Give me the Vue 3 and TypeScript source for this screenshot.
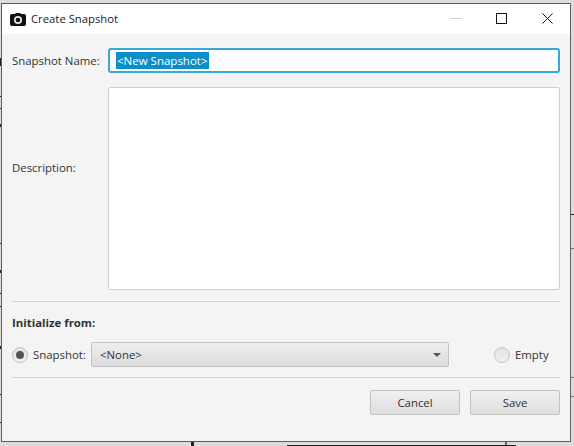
<script setup lang="ts">
const title = 'Create Snapshot'
const marks: { cls: string; top: number }[] = [
  { cls: 'dark', top: 214 },
  { cls: 'mid', top: 248 },
  { cls: 'mid', top: 377 },
  { cls: 'mid', top: 396 },
]
const leftMarks: { top: number; height: number }[] = [
  { top: 58, height: 8 },
  { top: 96, height: 1 },
  { top: 108, height: 1 },
  { top: 124, height: 3 },
  { top: 243, height: 1 },
  { top: 270, height: 3 },
  { top: 293, height: 1 },
  { top: 306, height: 1 },
  { top: 346, height: 3 },
  { top: 394, height: 1 },
  { top: 422, height: 1 },
]
</script>

<template>
  <div class="desktop">
    <span v-for="m in marks" :key="m.top" class="tick" :class="m.cls" :style="{ top: m.top + 'px' }"></span>
    <span v-for="m in leftMarks" :key="m.top" class="ltick" :style="{ top: m.top + 'px', height: m.height + 'px' }"></span>
    <span class="under v1"></span>
    <span class="under v2"></span>
    <span class="under h1"></span>
    <div class="window">
      <header class="titlebar">
        <svg class="cam" width="16" height="13" viewBox="0 0 16 13">
          <path fill="#111" d="M5 1 5.8 0h4.4l.8 1h3.2A1.8 1.8 0 0 1 16 2.8v8.4a1.8 1.8 0 0 1-1.8 1.8H1.8A1.8 1.8 0 0 1 0 11.2V2.8A1.8 1.8 0 0 1 1.8 1z" />
          <circle cx="8" cy="7" r="4" fill="#e8e8e8" />
          <circle cx="8" cy="7" r="2.3" fill="#111" />
        </svg>
        <span class="title">{{ title }}</span>
        <div class="controls">
          <span class="min"></span>
          <span class="max"></span>
          <svg class="close" width="11" height="11" viewBox="0 0 11 11">
            <path d="M.5.5l10 10M10.5.5l-10 10" stroke="#111" stroke-width="1" fill="none" />
          </svg>
        </div>
      </header>
      <main class="content">
        <div class="form-grid">
          <label class="lbl">Snapshot Name:</label>
          <div class="name-input"><span class="selected">&lt;New Snapshot&gt;</span></div>
          <label class="lbl desc">Description:</label>
          <div class="textarea"></div>
        </div>
        <hr class="sep first" />
        <div class="init">Initialize from:</div>
        <div class="row">
          <span class="radio on"><i></i></span>
          <span class="opt snap">Snapshot:</span>
          <div class="combo">
            <span>&lt;None&gt;</span>
            <b class="arrow"></b>
          </div>
          <span class="radio empty"></span>
          <span class="opt">Empty</span>
        </div>
        <hr class="sep" />
        <div class="actions">
          <button class="btn">Cancel</button>
          <button class="btn">Save</button>
        </div>
      </main>
    </div>
  </div>
</template>

<style>
html, body { margin: 0; background: #fff; }
</style>

<style scoped>
.desktop {
  position: relative;
  width: 574px;
  height: 446px;
  box-sizing: border-box;
  padding: 3px 3px 4px 1px;
  background: #dcdcdc;
  overflow: hidden;
  font-family: "Open Sans", "Noto Sans", sans-serif;
}
.tick { position: absolute; left: 571px; width: 3px; height: 1px; }
.tick.dark { background: #222; }
.tick.mid { background: #777; }
.ltick { position: absolute; left: 0; width: 1px; background: #222; }
.under { position: absolute; background: #222; }
.under.v1 { left: 191px; top: 442px; width: 3px; height: 4px; }
.under.v2 { left: 505px; top: 442px; width: 2px; height: 4px; background: #666; }
.under.h1 { left: 287px; top: 445px; width: 229px; height: 1px; }
.window {
  position: relative;
  width: 100%;
  height: 100%;
  box-sizing: border-box;
  border: 1px solid #5f5f5f;
  display: flex;
  flex-direction: column;
  background: #f4f4f4;
}
.titlebar {
  height: 30px;
  flex: none;
  background: #fff;
  display: flex;
  align-items: center;
  padding-left: 8px;
}
.cam { margin-right: 5px; }
.title { font-size: 11.3px; color: #222; margin-top: -1px; }
.controls {
  margin-left: auto;
  display: flex;
  align-items: center;
  margin-top: -1px;
}
.min { width: 12px; height: 1px; background: #cfcfcf; margin-right: 34px; }
.max { width: 9px; height: 9px; border: 1px solid #111; margin-right: 35px; }
.close { margin-right: 17px; }
.content {
  flex: 1;
  padding: 14px 10px 0 10px;
  display: flex;
  flex-direction: column;
  min-height: 0;
}
.form-grid {
  display: grid;
  grid-template-columns: 96px 1fr;
  grid-template-rows: 25px 203px;
  row-gap: 14px;
}
.lbl { font-size: 11.4px; color: #333; align-self: center; }
.lbl.desc { margin-bottom: 42px; }
.name-input {
  box-sizing: border-box;
  height: 25px;
  border: 2px solid #3aa6dc;
  border-radius: 3px;
  background: #fff;
  display: flex;
  align-items: center;
  padding-left: 6px;
  font-size: 11.5px;
}
.selected { background: #0a8fc9; color: #fff; line-height: 17px; padding: 0 1px; }
.textarea {
  border: 1px solid #cfcfcf;
  border-radius: 2px;
  background: #fff;
  box-sizing: border-box;
}
.sep { border: 0; height: 1px; background: #d2d2d2; margin: 0; flex: none; }
.sep.first { margin-top: 11px; }
.init { font-size: 11.4px; font-weight: 700; color: #333; margin-top: 12px; line-height: 17px; }
.row {
  display: flex;
  align-items: center;
  margin-top: 11px;
  height: 25px;
}
.radio {
  box-sizing: border-box;
  width: 16px;
  height: 16px;
  flex: none;
  border-radius: 50%;
  border: 1px solid #c4c4c4;
  background: linear-gradient(#e2e2e2, #f2f2f2);
  display: flex;
  align-items: center;
  justify-content: center;
}
.radio i { width: 8px; height: 8px; border-radius: 50%; background: #555; }
.opt { font-size: 11.4px; color: #333; margin-left: 5px; }
.opt.snap { width: 53px; flex: none; }
.combo {
  box-sizing: border-box;
  width: 358px;
  height: 25px;
  margin-left: 5px;
  border: 1px solid #c2c2c2;
  border-radius: 2px;
  background: linear-gradient(#eeeeee, #dcdcdc);
  display: flex;
  align-items: center;
  justify-content: space-between;
  padding: 0 7px 0 8px;
  font-size: 11.4px;
  color: #333;
}
.arrow {
  width: 0;
  height: 0;
  border-left: 4px solid transparent;
  border-right: 4px solid transparent;
  border-top: 4px solid #555;
}
.radio.empty { margin-left: 45px; }
.row + .sep { margin-top: 10px; }
.actions {
  display: flex;
  justify-content: flex-end;
  gap: 10px;
  margin-top: 12px;
}
.btn {
  box-sizing: border-box;
  width: 90px;
  height: 25px;
  border: 1px solid #c2c2c2;
  border-radius: 2px;
  background: linear-gradient(#f0f0f0, #dedede);
  font-family: inherit;
  font-size: 11.4px;
  color: #333;
  padding: 0;
}
</style>
